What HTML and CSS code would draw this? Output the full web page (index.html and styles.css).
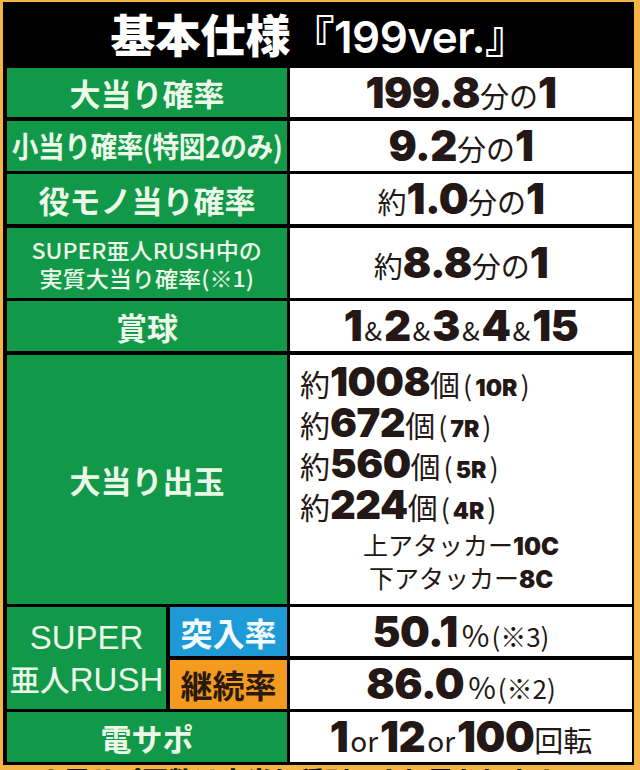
FILE: index.html
```html
<!DOCTYPE html>
<html lang="ja">
<head>
<meta charset="utf-8">
<title>基本仕様『199ver.』</title>
<link rel="stylesheet" href="styles.css">
</head>
<body>
<div class="frame">
  <div class="title"><p class="line"><span class="t-jp">基本仕様</span><span class="t-ver">『199ver.』</span></p></div>
  <div class="spec">
    <div class="lab"><p>大当り確率</p></div>
    <div class="val"><p class="line"><b>199.8</b><span class="u">分の</span><b>1</b></p></div>

    <div class="lab"><p class="cond">小当り確率(特図2のみ)</p></div>
    <div class="val"><p class="line"><b>9.2</b><span class="u">分の</span><b>1</b></p></div>

    <div class="lab"><p>役モノ当り確率</p></div>
    <div class="val"><p class="line"><span class="u">約</span><b>1.0</b><span class="u">分の</span><b>1</b></p></div>

    <div class="lab lab-sm"><p>SUPER亜人RUSH中の<br>実質大当り確率(※1)</p></div>
    <div class="val"><p class="line"><span class="u">約</span><b>8.8</b><span class="u">分の</span><b>1</b></p></div>

    <div class="lab"><p>賞球</p></div>
    <div class="val"><p class="line"><b>1</b><span class="amp">&amp;</span><b>2</b><span class="amp">&amp;</span><b>3</b><span class="amp">&amp;</span><b>4</b><span class="amp">&amp;</span><b>15</b></p></div>

    <div class="lab"><p>大当り出玉</p></div>
    <div class="val val-list">
      <p class="item"><span class="u">約</span><b>1008</b><span class="u">個</span><span class="par">(</span><b class="r">10R</b><span class="par">)</span></p>
      <p class="item"><span class="u">約</span><b>672</b><span class="u">個</span><span class="par">(</span><b class="r">7R</b><span class="par">)</span></p>
      <p class="item"><span class="u">約</span><b>560</b><span class="u">個</span><span class="par">(</span><b class="r">5R</b><span class="par">)</span></p>
      <p class="item"><span class="u">約</span><b>224</b><span class="u">個</span><span class="par">(</span><b class="r">4R</b><span class="par">)</span></p>
      <p class="att">上アタッカー<b>10C</b></p>
      <p class="att">下アタッカー<b>8C</b></p>
    </div>

    <div class="rush">
      <div class="rush-name"><p><span class="lat">SUPER</span><br>亜人<span class="lat">RUSH</span></p></div>
      <div class="tag tag-blue"><p>突入率</p></div>
      <div class="tag tag-orange"><p>継続率</p></div>
    </div>
    <div class="val"><p class="line"><b>50.1</b><span class="pct">%</span><span class="note-s">(※3)</span></p></div>
    <div class="val"><p class="line"><b>86.0</b><span class="pct">%</span><span class="note-s">(※2)</span></p></div>

    <div class="lab"><p>電サポ</p></div>
    <div class="val"><p class="line"><b>1</b><span class="or">or</span><b>12</b><span class="or">or</span><b>100</b><span class="u">回転</span></p></div>
  </div>
</div>
<p class="foot">●電サポ回数は大当り種別により異なります。</p>
</body>
</html>
```

FILE: styles.css
```css
html, body {
  margin: 0;
  padding: 0;
}
body {
  background: #f4b544;
  width: 640px;
  height: 770px;
  overflow: hidden;
  font-family: "Noto Sans CJK JP", sans-serif;
}
p { margin: 0; }

.frame {
  margin: 2px 0 0 3px;
  width: 625px;
  background: #000;
  padding: 0 2px 3px 4px;
}

.title {
  height: 66px;
  display: flex;
  align-items: center;
  justify-content: center;
  color: #fff;
}
.t-jp {
  font-family: "Noto Sans CJK JP", sans-serif;
  font-weight: 900;
  font-size: 45px;
}
.t-ver {
  font-family: Inter, "Noto Sans CJK JP", sans-serif;
  font-weight: 600;
  font-size: 44px;
  letter-spacing: -0.5px;
}

.spec {
  display: grid;
  grid-template-columns: 280px 342px;
  grid-template-rows: 49px 50px 50px 70px 50px 249px 49px 49px 50px;
  column-gap: 3px;
  row-gap: 3.5px;
}

.lab {
  background: #119848;
  color: #ecf8e8;
  font-family: "Noto Sans CJK JP", sans-serif;
  font-weight: 700;
  font-size: 31px;
  line-height: 1;
  display: flex;
  align-items: center;
  justify-content: center;
  text-align: center;
  white-space: nowrap;
}
.cond {
  font-size: 29px;
  transform: scaleX(0.92);
  letter-spacing: -0.5px;
}
.lab-sm {
  font-size: 22px;
  font-weight: 500;
  line-height: 28px;
}
.lab-sm p {
  transform: scaleX(1.05);
}

.val {
  background: #fff;
  color: #231815;
  display: flex;
  align-items: center;
  justify-content: center;
}
.line {
  white-space: nowrap;
  line-height: 1;
}
.val b {
  font-family: Inter, Lato, sans-serif;
  font-weight: 900;
  font-size: 42px;
  letter-spacing: -0.5px;
}
.u {
  font-family: "Noto Sans CJK JP", sans-serif;
  font-weight: 400;
  font-size: 29px;
}
.amp {
  font-family: "Noto Sans CJK JP", sans-serif;
  font-weight: 400;
  font-size: 26px;
  margin: 0 2px;
}
.pct {
  font-family: "Noto Sans CJK JP", sans-serif;
  font-weight: 400;
  font-size: 30px;
  margin-left: 4px;
}
.note-s {
  font-family: "Noto Sans CJK JP", sans-serif;
  font-weight: 400;
  font-size: 26px;
  margin-left: 2px;
}
.or {
  font-family: "Noto Sans CJK JP", sans-serif;
  font-weight: 400;
  font-size: 28px;
  margin: 0 2px;
}

.val-list {
  flex-direction: column;
  align-items: stretch;
  justify-content: flex-start;
  padding: 6px 0 0 10px;
}
.item {
  white-space: nowrap;
  line-height: 41px;
  height: 41px;
}
.item b {
  font-size: 40px;
}
.item .u {
  font-size: 30px;
}
.par {
  font-family: "Noto Sans CJK JP", sans-serif;
  font-weight: 400;
  font-size: 27px;
  margin: 0 3px;
}
.item b.r {
  font-size: 23px;
  letter-spacing: 0;
}
.att {
  text-align: center;
  margin-left: -10px;
  font-family: "Noto Sans CJK JP", sans-serif;
  font-weight: 400;
  font-size: 25px;
  line-height: 30px;
  white-space: nowrap;
}
.item + .att { margin-top: 4px; }
.val .att b {
  font-size: 24px;
  letter-spacing: 0;
}

.rush {
  grid-row: span 2;
  display: grid;
  grid-template-columns: 159px 117px;
  grid-template-rows: 49px 49px;
  column-gap: 4px;
  row-gap: 3.5px;
}
.rush-name {
  grid-row: span 2;
  background: #119848;
  color: #ecf8e8;
  display: flex;
  align-items: center;
  justify-content: center;
  text-align: center;
  font-family: "Noto Sans CJK JP", sans-serif;
  font-weight: 500;
  font-size: 30px;
  line-height: 40px;
  white-space: nowrap;
}
.lat {
  font-family: "Liberation Sans", Arial, sans-serif;
  font-size: 33px;
}
.tag {
  display: flex;
  align-items: center;
  justify-content: center;
  font-family: "Noto Sans CJK JP", sans-serif;
  font-weight: 700;
  font-size: 32px;
  line-height: 1;
}
.tag-blue {
  background: #1e9bd7;
  color: #f4fbff;
}
.tag-orange {
  background: #f39a1f;
  color: #2a1a0c;
}

.foot {
  margin: 0 0 0 38px;
  font-family: "Noto Sans CJK JP", sans-serif;
  font-weight: 900;
  font-size: 26px;
  line-height: 26px;
  color: #111;
  white-space: nowrap;
  position: relative;
  top: 2px;
}
```
